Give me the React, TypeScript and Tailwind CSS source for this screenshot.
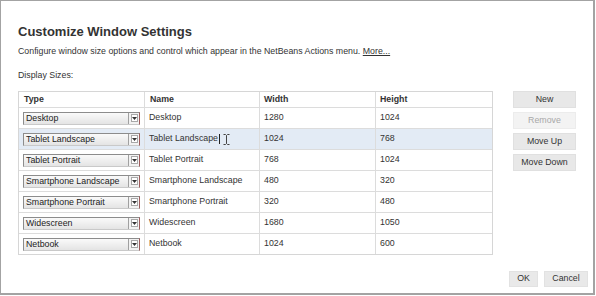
import React from "react";

const rows = [
  { type: "Desktop", name: "Desktop", w: "1280", h: "1024" },
  { type: "Tablet Landscape", name: "Tablet Landscape", w: "1024", h: "768", sel: true },
  { type: "Tablet Portrait", name: "Tablet Portrait", w: "768", h: "1024" },
  { type: "Smartphone Landscape", name: "Smartphone Landscape", w: "480", h: "320" },
  { type: "Smartphone Portrait", name: "Smartphone Portrait", w: "320", h: "480" },
  { type: "Widescreen", name: "Widescreen", w: "1680", h: "1050" },
  { type: "Netbook", name: "Netbook", w: "1024", h: "600" },
];

function Select({ value }: { value: string }) {
  return (
    <div className="flex h-[13px] w-[117px] items-stretch border border-[#8c8c8c] border-b-[#c9c9c9] border-r-[#9c5c5c] bg-gradient-to-b from-[#fafafa] to-[#e4e4e4]">
      <div className="flex-1 truncate pl-[2px] text-[8.8px] leading-[11px] text-[#222]">{value}</div>
      <div className="flex w-[11px] items-center justify-center border-l border-[#a0a0a0] bg-[#f2f2f2]">
        <div className="flex h-[8px] w-[7px] items-center justify-center border border-[#a8a8a8] bg-white">
          <svg width="5" height="3" viewBox="0 0 5 3">
            <path d="M0 0H5L2.5 3Z" fill="#333" />
          </svg>
        </div>
      </div>
    </div>
  );
}

function SideButton({ label, disabled }: { label: string; disabled?: boolean }) {
  return (
    <div
      className={
        "flex h-[17px] w-[63px] items-center justify-center border text-[8.8px] leading-none " +
        (disabled
          ? "border-[#ececec] bg-[#f3f3f3] text-[#a8a8a8]"
          : "border-[#e0e0e0] bg-[#e8e8e8] text-[#333]")
      }
    >
      {label}
    </div>
  );
}

export default function App() {
  return (
    <div
      className="h-[296px] w-[596px] bg-white"
      style={{ fontFamily: '"Liberation Sans", Arial, sans-serif' }}
    >
      <div className="relative flex h-[295px] w-[595px] flex-col border border-r-2 border-b-2 border-[#a3a3a3] pl-[17px] text-[#333]">
        <div className="mt-[23px] text-[13px] font-bold leading-[16px] text-[#333]">
          Customize Window Settings
        </div>
        <div className="mt-[6px] text-[8.8px] leading-[11px]">
          Configure window size options and control which appear in the NetBeans Actions menu.{" "}
          <span className="underline">More...</span>
        </div>
        <div className="mt-[13px] text-[8.8px] leading-[11px]">Display Sizes:</div>
        <div className="mt-[10px] flex items-start">
          <div className="w-[475px] border border-[#d6d6d6] text-[8.8px]">
            <div className="grid h-[16px] grid-cols-[126px_115px_116px_116px] items-center border-b border-[#dcdcdc] font-bold">
              <div className="h-full border-r border-[#dcdcdc] pl-[5px] leading-[15px]">Type</div>
              <div className="h-full border-r border-[#dcdcdc] pl-[5px] leading-[15px]">Name</div>
              <div className="h-full border-r border-[#dcdcdc] pl-[4px] leading-[15px]">Width</div>
              <div className="h-full pl-[4px] leading-[15px]">Height</div>
            </div>
            {rows.map((r, i) => (
              <div
                key={r.type}
                className={
                  "grid grid-cols-[126px_115px_116px_116px] items-center " +
                  (i < rows.length - 1 ? "h-[21px] border-b border-[#dcdcdc] " : "h-[20px] ") +
                  (r.sel ? "bg-[#e3ebf5]" : "bg-white")
                }
              >
                <div className="flex h-full items-center border-r border-[#dcdcdc] pl-[4px]">
                  <Select value={r.type} />
                </div>
                <div className="relative flex h-full items-center border-r border-[#dcdcdc] pl-[4px]">
                  <span>{r.name}</span>
                  {r.sel && (
                    <>
                      <span className="ml-[1px] inline-block h-[10px] w-px bg-[#222]" />
                      <svg className="absolute left-[78px] top-[5px]" width="7" height="11" viewBox="0 0 7 11">
                        <path d="M0.5 0.5H2.5L3.5 1.5L4.5 0.5H6.5M3.5 1.5V9.5M0.5 10.5H2.5L3.5 9.5L4.5 10.5H6.5" fill="none" stroke="#444" strokeWidth="1" />
                      </svg>
                    </>
                  )}
                </div>
                <div className="flex h-full items-center border-r border-[#dcdcdc] pl-[4px]">{r.w}</div>
                <div className="flex h-full items-center pl-[4px]">{r.h}</div>
              </div>
            ))}
          </div>
          <div className="ml-[20px] flex flex-col gap-[4px]">
            <SideButton label="New" />
            <SideButton label="Remove" disabled />
            <SideButton label="Move Up" />
            <SideButton label="Move Down" />
          </div>
        </div>
        <div className="mt-[16px] flex justify-end gap-[6px] pr-[5px]">
          <div className="flex h-[16px] w-[29px] items-center justify-center border border-[#e2e2e2] bg-[#e9e9e9] text-[8.8px]">OK</div>
          <div className="flex h-[16px] w-[44px] items-center justify-center border border-[#e2e2e2] bg-[#e9e9e9] text-[8.8px]">Cancel</div>
        </div>
      </div>
    </div>
  );
}
